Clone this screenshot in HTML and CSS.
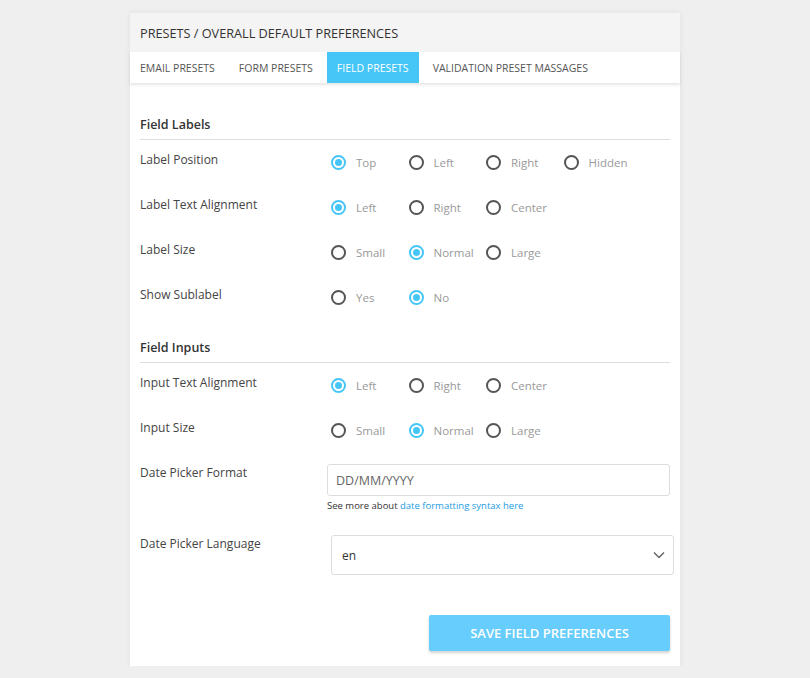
FILE: index.html
```html
<!DOCTYPE html>
<html lang="en">
  <head>
    <meta charset="UTF-8" />
    <meta name="viewport" content="width=device-width, initial-scale=1.0" />
    <title>Presets - Field Preferences</title>
    <link rel="stylesheet" href="styles.css">
  </head>
  <body>
    <div class="card">
      <!-- Panel header -->
      <div class="card-header">PRESETS / OVERALL DEFAULT PREFERENCES</div>

      <!-- Tabs -->
      <div class="tabs">
        <a href="#" class="tab">EMAIL PRESETS</a>
        <a href="#" class="tab">FORM PRESETS</a>
        <a href="#" class="tab active">FIELD PRESETS</a>
        <a href="#" class="tab">VALIDATION PRESET MASSAGES</a>
      </div>

      <form class="card-body">
        <!-- Field Labels -->
        <div class="section-title">Field Labels</div>

        <div class="row">
          <div class="row-label">Label Position</div>
          <div class="radios">
            <label class="radio"><input type="radio" name="lpos" checked /><span class="dot"></span>Top</label>
            <label class="radio"><input type="radio" name="lpos" /><span class="dot"></span>Left</label>
            <label class="radio"><input type="radio" name="lpos" /><span class="dot"></span>Right</label>
            <label class="radio"><input type="radio" name="lpos" /><span class="dot"></span>Hidden</label>
          </div>
        </div>

        <div class="row">
          <div class="row-label">Label Text Alignment</div>
          <div class="radios">
            <label class="radio"><input type="radio" name="lalign" checked /><span class="dot"></span>Left</label>
            <label class="radio"><input type="radio" name="lalign" /><span class="dot"></span>Right</label>
            <label class="radio"><input type="radio" name="lalign" /><span class="dot"></span>Center</label>
          </div>
        </div>

        <div class="row">
          <div class="row-label">Label Size</div>
          <div class="radios">
            <label class="radio"><input type="radio" name="lsize" /><span class="dot"></span>Small</label>
            <label class="radio"><input type="radio" name="lsize" checked /><span class="dot"></span>Normal</label>
            <label class="radio"><input type="radio" name="lsize" /><span class="dot"></span>Large</label>
          </div>
        </div>

        <div class="row">
          <div class="row-label">Show Sublabel</div>
          <div class="radios">
            <label class="radio"><input type="radio" name="sublabel" /><span class="dot"></span>Yes</label>
            <label class="radio"><input type="radio" name="sublabel" checked /><span class="dot"></span>No</label>
          </div>
        </div>

        <!-- Field Inputs -->
        <div class="section-title">Field Inputs</div>

        <div class="row">
          <div class="row-label">Input Text Alignment</div>
          <div class="radios">
            <label class="radio"><input type="radio" name="ialign" checked /><span class="dot"></span>Left</label>
            <label class="radio"><input type="radio" name="ialign" /><span class="dot"></span>Right</label>
            <label class="radio"><input type="radio" name="ialign" /><span class="dot"></span>Center</label>
          </div>
        </div>

        <div class="row">
          <div class="row-label">Input Size</div>
          <div class="radios">
            <label class="radio"><input type="radio" name="isize" /><span class="dot"></span>Small</label>
            <label class="radio"><input type="radio" name="isize" checked /><span class="dot"></span>Normal</label>
            <label class="radio"><input type="radio" name="isize" /><span class="dot"></span>Large</label>
          </div>
        </div>

        <div class="row row-field">
          <div class="row-label">Date Picker Format</div>
          <div class="field">
            <input type="text" class="text-input" value="DD/MM/YYYY" />
            <p class="help">See more about <a href="#">date formatting syntax here</a></p>
          </div>
        </div>

        <div class="row row-field">
          <div class="row-label">Date Picker Language</div>
          <div class="select">
            <span>en</span>
            <svg width="14" height="14" viewBox="0 0 14 14">
              <polyline points="2,4.5 7,9.5 12,4.5" fill="none" stroke="#666" stroke-width="1.5" />
            </svg>
          </div>
        </div>

        <div class="actions">
          <button type="button" class="btn-save">SAVE FIELD PREFERENCES</button>
        </div>
      </form>
    </div>
  </body>
</html>
```

FILE: styles.css
```css
* {
  margin: 0;
  padding: 0;
  box-sizing: border-box;
  font-family: "Open Sans", "Noto Sans", sans-serif;
}

body {
  background-color: #efefef;
  padding-top: 13px;
  color: #444;
}

/* Card */
.card {
  width: 550px;
  margin: 0 auto;
  background-color: #fff;
  box-shadow: 0 0 6px rgba(0, 0, 0, 0.07);
}

.card-header {
  height: 39px;
  line-height: 41px;
  padding-left: 10px;
  background-color: #f4f4f4;
  font-size: 12.7px;
  color: #333;
}

/* Tabs */
.tabs {
  display: flex;
  height: 31px;
  background-color: #fff;
  box-shadow: 0 2px 3px rgba(0, 0, 0, 0.1);
  position: relative;
}

.tab {
  display: flex;
  align-items: center;
  padding: 0 10px;
  margin-right: 4px;
  font-size: 10.5px;
  color: #555;
  text-decoration: none;
}

.tab.active {
  background-color: #45c6f7;
  color: #fff;
}

/* Body */
.card-body {
  padding: 32px 10px 15px;
}

.section-title {
  font-size: 12.5px;
  font-weight: 600;
  color: #333;
  line-height: 20px;
  padding-bottom: 4px;
  border-bottom: 1px solid #ddd;
  margin-bottom: 10px;
}

.row + .section-title {
  margin-top: 31px;
}

.row {
  display: flex;
  align-items: flex-start;
  margin-bottom: 23px;
}

.row-label {
  width: 187px;
  flex-shrink: 0;
  font-size: 12px;
  line-height: 20px;
  color: #444;
}

/* Radios */
.radios {
  display: flex;
  padding: 2px 0 0 4px;
}

.radio {
  display: flex;
  align-items: center;
  width: 77.5px;
  height: 20px;
  font-size: 11.5px;
  color: #999;
  cursor: pointer;
}

.radio input {
  display: none;
}

.dot {
  width: 15px;
  height: 15px;
  border: 2px solid #555;
  border-radius: 50%;
  margin-right: 10px;
  position: relative;
}

.radio input:checked + .dot {
  border-color: #45c6f7;
}

.radio input:checked + .dot::after {
  content: "";
  position: absolute;
  top: 2px;
  left: 2px;
  width: 7px;
  height: 7px;
  border-radius: 50%;
  background-color: #45c6f7;
}

/* Text input and select */
.row-field {
  margin-bottom: 22px;
}

.field {
  width: 343px;
  padding-top: 1px;
}

.text-input {
  width: 100%;
  height: 32px;
  padding: 0 8px;
  border: 1px solid #ddd;
  border-radius: 3px;
  font-size: 12.5px;
  color: #666;
  outline: none;
}

.help {
  margin-top: 3px;
  font-size: 9.5px;
  line-height: 13px;
  color: #333;
}

.help a {
  color: #1d9ce0;
  text-decoration: none;
}

.select {
  display: flex;
  justify-content: space-between;
  align-items: center;
  flex-shrink: 0;
  width: 343px;
  height: 40px;
  margin: 1px 0 0 4px;
  padding: 0 7px 0 10px;
  border: 1px solid #ddd;
  border-radius: 3px;
  font-size: 12px;
  color: #333;
}

/* Save button */
.actions {
  display: flex;
  justify-content: flex-end;
  margin-top: 40px;
}

.btn-save {
  width: 241px;
  height: 36px;
  border: none;
  border-radius: 2px;
  background-color: #66cdfc;
  color: #fff;
  font-size: 13px;
  font-weight: 600;
  box-shadow: 0 2px 3px rgba(0, 0, 0, 0.18);
  cursor: pointer;
}
```
